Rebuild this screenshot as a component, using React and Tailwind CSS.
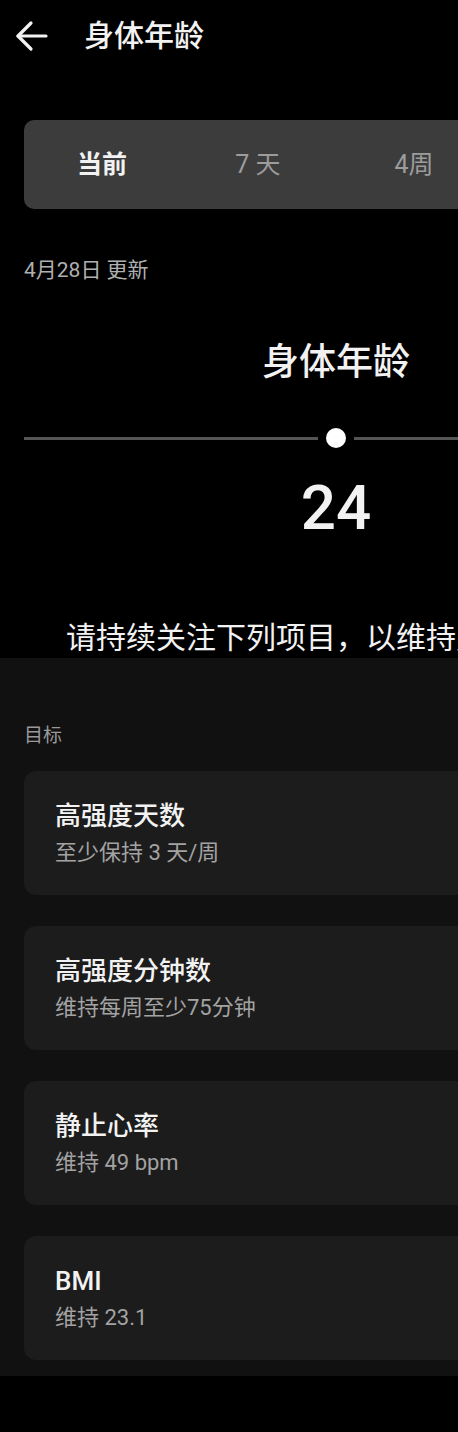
import React from "react";

const goals = [
  { title: "高强度天数", sub: "至少保持 3 天/周" },
  { title: "高强度分钟数", sub: "维持每周至少75分钟" },
  { title: "静止心率", sub: "维持 49 bpm" },
  { title: "BMI", sub: "维持 23.1" },
];

export default function App() {
  return (
    <div className="w-[458px] h-[1432px] overflow-hidden bg-black font-['Roboto','Noto_Sans_CJK_SC',sans-serif]">
      <div className="w-[672px]">
        {/* header */}
        <div className="h-[72px] flex items-center">
          <svg
            className="ml-[15px]"
            width="34"
            height="34"
            viewBox="0 0 34 34"
            fill="none"
            stroke="#f2f2f2"
            strokeWidth="3.2"
            strokeLinecap="round"
            strokeLinejoin="round"
          >
            <path d="M3 17 L31 17" />
            <path d="M16 4 L3 17 L16 30" />
          </svg>
          <div className="ml-[35px] text-[30px] leading-[36px] font-medium text-[#f2f2f2]">
            身体年龄
          </div>
        </div>

        {/* tabs */}
        <div className="mt-[48px] mx-[24px] h-[89px] rounded-[10px] bg-[#3c3c3c] grid grid-cols-4 items-center text-center text-[25px] leading-[32px]">
          <div className="font-bold text-[#f2f2f2]">当前</div>
          <div className="text-[#9c9c9c]">7 天</div>
          <div className="text-[#9c9c9c]">4周</div>
          <div className="text-[#9c9c9c]">1年</div>
        </div>

        {/* date */}
        <div className="mt-[47px] ml-[24px] text-[21px] leading-[28px] text-[#b0b0b0]">
          4月28日 更新
        </div>

        {/* big title */}
        <div className="mt-[57px] text-center text-[37px] leading-[44px] font-medium text-[#f2f2f2]">
          身体年龄
        </div>

        {/* slider */}
        <div className="mt-[43px] mx-[24px] h-[20px] flex items-center">
          <div className="flex-1 h-[3px] bg-[#555555]" />
          <div className="mx-[8px] w-[20px] h-[20px] rounded-full bg-white" />
          <div className="flex-1 h-[3px] bg-[#555555]" />
        </div>

        {/* value */}
        <div className="mt-[29px] text-center text-[62px] leading-[62px] font-medium text-[#f2f2f2]">
          24
        </div>

        {/* message */}
        <div className="mt-[79px] text-center text-[30px] leading-[40px] text-[#f2f2f2] whitespace-nowrap">
          请持续关注下列项目，以维持身体年龄。
        </div>

        {/* goals */}
        <div className="bg-[#111111] pt-[65px] pb-[16px]">
          <div className="ml-[24px] text-[19px] leading-[26px] text-[#9a9a9a]">目标</div>
          <div className="mt-[22px] mx-[24px] flex flex-col gap-[31px]">
            {goals.map((g) => (
              <div
                key={g.title}
                className="h-[124px] rounded-[12px] bg-[#1c1c1c] pl-[31px] flex flex-col justify-center gap-[6px]"
              >
                <div className="text-[26px] leading-[32px] font-medium text-[#f2f2f2]">
                  {g.title}
                </div>
                <div className="text-[22px] leading-[29px] text-[#a3a3a3]">{g.sub}</div>
              </div>
            ))}
          </div>
        </div>
      </div>
    </div>
  );
}
